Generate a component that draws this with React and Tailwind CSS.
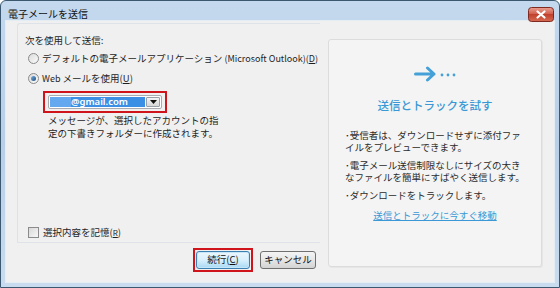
import React from "react";

const FONT = { fontFamily: '"Noto Sans CJK JP", "Noto Sans", sans-serif' };

const Radio = ({ checked }) => (
  <span className="flex h-[11px] w-[11px] shrink-0 items-center justify-center rounded-full border border-[#8b8b8b] bg-gradient-to-br from-[#dcdcdc] to-[#fafafa]">
    {checked && <span className="h-[5px] w-[5px] rounded-full bg-gradient-to-br from-[#7ab0e0] to-[#1d4f82]" />}
  </span>
);

const Checkbox = () => (
  <span className="h-[11px] w-[11px] shrink-0 border border-[#8b8b8b] bg-gradient-to-br from-[#d8d8d8] to-[#f8f8f8]" />
);

const CloseButton = () => (
  <svg width="26" height="15" viewBox="0 0 26 15" className="block">
    <defs>
      <linearGradient id="closeRed" x1="0" y1="0" x2="0" y2="1">
        <stop offset="0" stopColor="#e9a193" />
        <stop offset="0.45" stopColor="#d2604e" />
        <stop offset="0.5" stopColor="#c0412e" />
        <stop offset="1" stopColor="#d66a52" />
      </linearGradient>
    </defs>
    <rect x="0.5" y="0.5" width="25" height="14" rx="3" fill="url(#closeRed)" stroke="#7e2a20" />
    <path d="M9.5 4.5L16.5 10.5M16.5 4.5L9.5 10.5" stroke="#fff" strokeWidth="2.2" strokeLinecap="round" />
  </svg>
);

const SendArrow = () => (
  <svg width="44" height="16" viewBox="0 0 44 16" className="block">
    <path d="M1.5 8H20M13.5 2L20 8L13.5 14" fill="none" stroke="#45a0d8" strokeWidth="3" strokeLinecap="round" strokeLinejoin="round" />
    <circle cx="28" cy="9" r="1.4" fill="#45a0d8" />
    <circle cx="34" cy="9" r="1.4" fill="#45a0d8" />
    <circle cx="40" cy="9" r="1.4" fill="#45a0d8" />
  </svg>
);

const Bullet = ({ lines }) => (
  <p className="text-[9.5px] leading-[12px] text-[#2b2b2b]">
    {lines.map((line, i) => (
      <React.Fragment key={i}>
        {i > 0 && <br />}
        {line}
      </React.Fragment>
    ))}
  </p>
);

export default function App() {
  return (
    <div style={FONT} className="h-[288px] w-[560px] overflow-hidden bg-white">
      <div className="flex h-full w-full flex-col rounded-t-[6px] border border-[#3b5870] bg-gradient-to-b from-[#c4d9ee] via-[#b8cfe8] to-[#c9dcef] px-[4px] pb-[4px]">
        {/* title bar */}
        <div className="flex h-[19px] shrink-0 items-start justify-between pl-[3px] pr-[1px] pt-[6px]">
          <span className="mt-[2px] text-[10px] leading-[10px] text-[#111]">電子メールを送信</span>
          <span className="relative z-10">
            <CloseButton />
          </span>
        </div>

        {/* client area */}
        <div className="flex flex-1 border border-[#e4ecf4] bg-[#f0f0f0] pl-[11px] pt-[2px]">
          {/* left column */}
          <div className="flex w-[303px] flex-col">
            <div className="flex h-[220px] flex-col rounded-tl-[3px] border-y border-l border-[#dde3e8] pb-[4px]">
              <p className="ml-[7px] mt-[10px] text-[9.5px] leading-[12px] text-[#1e1e1e]">次を使用して送信:</p>
              <div className="ml-[10px] mt-[6px] flex h-[12px] items-center gap-[3px]">
                <Radio />
                <span className="text-[9.5px] leading-[12px] text-[#1e1e1e]">
                  デフォルトの電子メールアプリケーション <span className="text-[9px]">(Microsoft Outlook)(<span className="underline">D</span>)</span>
                </span>
              </div>
              <div className="ml-[10px] mt-[8px] flex h-[12px] items-center gap-[3px]">
                <Radio checked />
                <span className="text-[9.5px] leading-[12px] text-[#1e1e1e]">
                  <span className="text-[9px]">Web</span> メールを使用(<span className="underline">U</span>)
                </span>
              </div>
              <div className="ml-[25px] mt-[7px] w-[124px] border-2 border-[#d0141c] px-[3px] py-[2px]">
                <div className="flex h-[14px] items-center rounded-[2px] border border-[#a9abb0] bg-white p-[1px]">
                  <div className="flex h-full flex-1 items-center bg-[#3b8fe5]">
                    <span className="h-full w-[21px] bg-[#64a9ef]" />
                    <span style={{ fontFamily: '"Noto Sans", sans-serif' }} className="text-[9.5px] font-semibold leading-none text-white">@gmail.com</span>
                  </div>
                  <div className="ml-[1px] flex h-full w-[14px] items-center justify-center rounded-[1px] border border-[#9aa0a8] bg-gradient-to-b from-[#f4f4f4] to-[#d6d6d6]">
                    <svg width="7" height="4" viewBox="0 0 7 4">
                      <path d="M0 0H7L3.5 4Z" fill="#111" />
                    </svg>
                  </div>
                </div>
              </div>
              <p className="ml-[30px] mt-[1px] text-[9.5px] leading-[13px] text-[#1e1e1e]">
                メッセージが、選択したアカウントの指
                <br />
                定の下書きフォルダーに作成されます。
              </p>
              <div className="ml-[10px] mt-auto flex h-[12px] items-center gap-[4px]">
                <Checkbox />
                <span className="text-[9.5px] leading-[12px] text-[#1e1e1e]">
                  選択内容を記憶(<span className="text-[8px] underline">R</span>)
                </span>
              </div>
            </div>

            {/* buttons */}
            <div className="mt-[5px] flex items-center justify-end gap-[7px] pr-[4px]">
              <div className="border-2 border-[#d0141c] p-[1px]">
                <button className="flex h-[18px] w-[54px] items-center justify-center rounded-[3px] border border-[#3c7fb1] bg-gradient-to-b from-[#eaf6fd] via-[#d9f0fc] to-[#a7d9f5] text-[9.5px] leading-none text-[#111] shadow-[inset_0_0_0_1px_#c7e7f8]">
                  続行(<span className="underline">C</span>)
                </button>
              </div>
              <button className="flex h-[18px] w-[56px] items-center justify-center rounded-[3px] border border-[#707070] bg-gradient-to-b from-[#f4f4f4] via-[#e6e6e6] to-[#d3d3d3] text-[9.5px] leading-none text-[#111]">
                キャンセル
              </button>
            </div>
          </div>

          {/* right panel */}
          <div className="ml-[8px] mt-[16px] flex h-[228px] w-[214px] flex-col rounded-[3px] border border-[#dcdcdc] bg-[#f4f4f4] shadow-[1px_1px_0_#e6e6e6]">
            <div className="mt-[26px] flex justify-center pl-[2px]">
              <SendArrow />
            </div>
            <p className="mt-[16px] text-center text-[11.5px] font-medium leading-[14px] text-[#3a98d6]">送信とトラックを試す</p>
            <div className="mt-[17px] flex flex-col gap-[6px] pl-[16px] pr-[8px]">
              <Bullet lines={["･受信者は、ダウンロードせずに添付ファ", "イルをプレビューできます。"]} />
              <Bullet lines={["･電子メール送信制限なしにサイズの大き", "なファイルを簡単にすばやく送信します。"]} />
              <Bullet lines={["･ダウンロードをトラックします。"]} />
            </div>
            <p className="mt-[8px] text-center text-[9.5px] leading-[12px] text-[#3a98d6] underline">送信とトラックに今すぐ移動</p>
          </div>
        </div>
      </div>
    </div>
  );
}
